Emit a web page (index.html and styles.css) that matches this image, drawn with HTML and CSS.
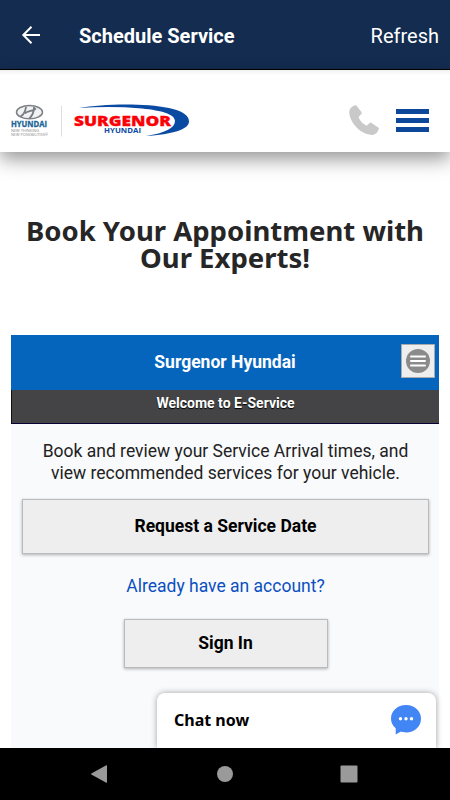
FILE: index.html
```html
<!DOCTYPE html>
<html lang="en">

<head>
    <meta charset="UTF-8">
    <meta name="viewport" content="width=device-width, initial-scale=1.0">
    <title>Schedule Service</title>
    <link rel="stylesheet" href="styles.css">
</head>

<body>

    <div class="app-bar">
        <svg class="back-icon" width="20" height="20" viewBox="0 0 20 20">
            <path d="M19 10H3M10.5 1.8L2.3 10l8.2 8.2" fill="none" stroke="#fff" stroke-width="2" />
        </svg>
        <span class="app-title">Schedule Service</span>
        <span class="refresh">Refresh</span>
    </div>

    <div class="site-header">
        <svg class="logo" width="190" height="40" viewBox="0 0 190 40">
            <!-- Hyundai -->
            <ellipse cx="29.500" cy="12.200" rx="13" ry="6.600" fill="#f1f2f3" stroke="#7c8186" stroke-width="1.500" />
            <path d="M26 6.800c-.5 4-2.500 8-5.500 9.800M34 7c0 4-1.500 8.500-4.500 11.200M25 13.500c3-3.500 6.500-1 11-5" fill="none" stroke="#787d82" stroke-width="1.800" />
            <text x="11" y="27" textLength="36" lengthAdjust="spacingAndGlyphs" class="logo-hyundai">HYUNDAI</text>
            <text x="11" y="32.300" textLength="28" lengthAdjust="spacingAndGlyphs" class="logo-tagline">NEW THINKING</text>
            <text x="11" y="36.300" textLength="37" lengthAdjust="spacingAndGlyphs" class="logo-tagline">NEW POSSIBILITIES®</text>
            <path d="M61.500 5.500v31" stroke="#dedede" />
            <!-- Surgenor -->
            <path d="M79 8C104 3.500 145 3 169 8c14 3 20 7.500 20 13.500 0 8-17 13-43 14.500 19-3 29-8 29-15 0-6.500-13-10.500-33-12.500-21-1.800-42-1.800-63-.5z" fill="#0b4aa2" />
            <text x="74" y="26.200" textLength="97" lengthAdjust="spacingAndGlyphs" class="logo-surgenor">SURGENOR</text>
            <text x="104" y="33" textLength="37" lengthAdjust="spacingAndGlyphs" class="logo-dealer">HYUNDAI</text>
        </svg>
        <div class="header-icons">
            <svg width="30" height="30" viewBox="0 0 30 30">
                <path d="M6.200.2Q7 0 7.600.8l4.800 6.200q.7 1-.1 2L9.500 12c1.500 4 4.200 6.800 8 8.700l3.200-2.800q1-.8 2 0l6.500 4.700q1 .7.500 1.700-2 5.200-6 5.600C12 30 .2 17.500.2 6.500Q.6 2 6.200.2z" fill="#c9c9c9" />
            </svg>
            <div class="menu-icon">
                <span></span>
                <span></span>
                <span></span>
            </div>
        </div>
    </div>

    <div class="page-container">
        <h1>Book Your Appointment with<br>Our Experts!</h1>

        <div class="scheduler">
            <div class="dealer-bar">
                <h2>Surgenor Hyundai</h2>
                <button class="dealer-menu">
                    <svg width="24" height="24" viewBox="0 0 24 24">
                        <circle cx="12" cy="12" r="12" fill="#8b8b8b" />
                        <path d="M5 7.500h14M5 12h14M5 16.500h14" stroke="#fff" stroke-width="2" stroke-linecap="round" />
                    </svg>
                </button>
            </div>
            <div class="welcome">Welcome to E-Service</div>
            <div class="content">
                <p>Book and review your Service Arrival times, and<br>view recommended services for your vehicle.</p>
                <button class="request">Request a Service Date</button>
                <a href="#" class="account">Already have an account?</a>
                <button class="sign-in">Sign In</button>
            </div>
        </div>

        <div class="chat">
            <span>Chat now</span>
            <svg width="30" height="30" viewBox="0 0 30 30">
                <path d="M15 0c8.500 0 15 5.800 15 13.700s-6.500 13.800-15 13.800c-2 0-3.500-.3-5-.9L4.700 29.500v-6.200C1.800 20.800 0 17.600 0 13.700 0 5.800 6.500 0 15 0z" fill="#4285f4" />
                <circle cx="9.500" cy="13.700" r="1.700" fill="#fff" />
                <circle cx="15" cy="13.700" r="1.700" fill="#fff" />
                <circle cx="20.500" cy="13.700" r="1.700" fill="#fff" />
            </svg>
        </div>
    </div>

    <div class="nav-bar">
        <svg width="18" height="18" viewBox="0 0 18 18">
            <path d="M.8 8.200L15.300.3q.7-.3.700.5v16.400q0 .8-.7.500L.8 9.800q-1.500-.8 0-1.600z" fill="#9a9a9a" />
        </svg>
        <svg width="18" height="18" viewBox="0 0 18 18">
            <circle cx="9" cy="9" r="8" fill="#9a9a9a" />
        </svg>
        <svg width="18" height="18" viewBox="0 0 18 18">
            <rect x=".5" y=".5" width="17" height="17" rx="1" fill="#9a9a9a" />
        </svg>
    </div>

</body>

</html>
```

FILE: styles.css
```css
* {
    box-sizing: border-box;
}

body {
    margin: 0;
    height: 800px;
    display: flex;
    flex-direction: column;
    overflow: hidden;
    background-color: #fff;
    font-family: Roboto, sans-serif;
}

svg {
    display: block;
}

h1,
h2,
p {
    margin: 0;
}

button {
    padding: 0;
    font-family: inherit;
    background-color: #eee;
    border: 1px solid #bbb;
    border-radius: 0;
}

.app-bar {
    height: 70px;
    padding: 2px 11px 0 21px;
    display: flex;
    align-items: center;
    background-color: #132c50;
    border-bottom: 1px solid #000;
    color: #fff;
    font-size: 20px;
}

.back-icon {
    margin-bottom: 1px;
}

.app-title {
    margin-left: 38px;
    font-weight: 700;
}

.refresh {
    margin-left: auto;
}

.site-header {
    position: relative;
    height: 82px;
    padding: 30px 21px 0 0;
    display: flex;
    justify-content: space-between;
    background: linear-gradient(#f0f0f0, #fff 5px);
    box-shadow: 0 7px 18px rgba(0, 0, 0, 0.42);
}

.logo {
    font-family: "Open Sans", sans-serif;
    font-weight: 700;
}

.logo-hyundai {
    font-size: 8px;
    fill: #206597;
    stroke: #206597;
    stroke-width: 0.3;
}

.logo-tagline {
    font-size: 4.3px;
    font-weight: 400;
    fill: #888;
}

.logo-surgenor {
    font-size: 14px;
    font-weight: 800;
    fill: #fb0006;
    stroke: #fb0006;
    stroke-width: 0.3;
}

.logo-dealer {
    font-size: 7.5px;
    fill: #0b4aa2;
}

.header-icons {
    display: flex;
    gap: 17px;
    padding-top: 5px;
}

.menu-icon {
    width: 33px;
    padding-top: 4px;
    display: flex;
    flex-direction: column;
    gap: 4px;
}

.menu-icon span {
    height: 5px;
    background-color: #0c479a;
}

.page-container {
    position: relative;
    flex: 1;
    display: flex;
    flex-direction: column;
    padding: 65px 11px 0 11px;
}

h1 {
    color: #262626;
    font: 700 27.5px/27px "Noto Sans", sans-serif;
    text-align: center;
}

.scheduler {
    flex: 1;
    margin-top: 64px;
    background-color: #f9fafc;
}

.dealer-bar {
    height: 55px;
    display: grid;
    grid-template-columns: 38px 1fr 38px;
    align-items: center;
    background-color: #0565bd;
}

.dealer-bar h2 {
    grid-column: 2;
    margin-top: -1px;
    color: #fff;
    font-size: 17.5px;
    text-align: center;
}

.dealer-menu {
    width: 34px;
    height: 34px;
    margin-top: -3px;
    display: flex;
    align-items: center;
    justify-content: center;
    border: 1px solid #aaa;
}

.welcome {
    height: 34px;
    background-color: #444446;
    border-bottom: 1px solid #080034;
    border-left: 1px solid #111;
    color: #fff;
    font-size: 14px;
    font-weight: 700;
    line-height: 27px;
    text-align: center;
    text-shadow: 0 1px 1px #000;
}

.content {
    display: flex;
    flex-direction: column;
    align-items: center;
    padding: 16px 10px 0 11px;
}

.content p {
    color: #222;
    font-size: 17.5px;
    line-height: 22px;
    text-align: center;
    white-space: nowrap;
}

.content button {
    padding-bottom: 1px;
    font-size: 17.5px;
    font-weight: 700;
    box-shadow: 0 1px 3px rgba(0, 0, 0, 0.3);
}

.content .request {
    width: 100%;
    height: 55px;
    margin-top: 15px;
}

.account {
    margin-top: 21px;
    color: #0a4fc0;
    font-size: 17.5px;
    line-height: 22px;
    text-decoration: none;
}

.content .sign-in {
    width: 204px;
    height: 49px;
    margin-top: 22px;
}

.chat {
    position: absolute;
    right: 14px;
    bottom: 0;
    width: 279px;
    height: 55px;
    padding: 0 15px 1px 17px;
    display: flex;
    align-items: center;
    justify-content: space-between;
    background-color: #fff;
    border-radius: 8px 8px 0 0;
    box-shadow: 0 0 6px rgba(0, 0, 0, 0.35);
    font: 700 16px "Noto Sans", sans-serif;
}

.nav-bar {
    position: relative;
    height: 52px;
    padding: 0 92px 0 91px;
    display: flex;
    align-items: center;
    justify-content: space-between;
    background-color: #000;
}
```
